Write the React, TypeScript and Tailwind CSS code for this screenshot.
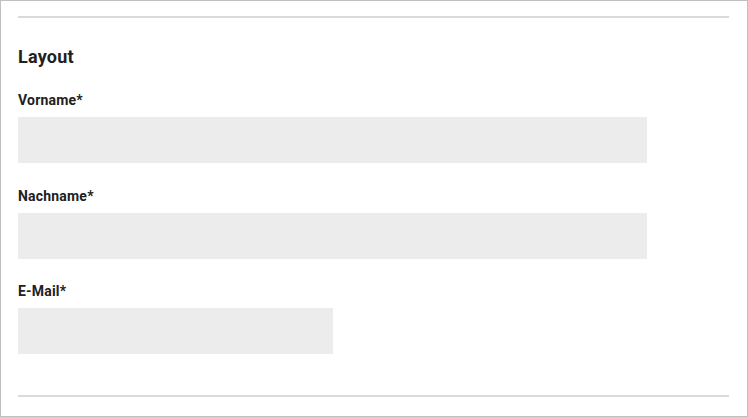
function Field({ label, width }: { label: string; width: string }) {
  return (
    <div className="flex flex-col">
      <label className="text-[14px] leading-[20px] font-bold tracking-[0.2px] text-[#212121]">{label}</label>
      <div className={`mt-[7px] h-[46px] bg-[#ececec] ${width}`} />
    </div>
  );
}

export default function App() {
  return (
    <div
      className="flex h-[417px] w-[748px] flex-col border border-[#c0c0c0] bg-white pt-[15px] pl-[17px] pr-[18px]"
      style={{ fontFamily: "Roboto, 'Liberation Sans', sans-serif" }}
    >
      <div className="h-[2px] bg-[#dadada]" />
      <h2 className="mt-[27px] text-[18px] leading-[24px] font-bold tracking-[0.2px] text-[#212121]">Layout</h2>
      <div className="mt-[21px] flex flex-col gap-[22.5px]">
        <Field label="Vorname*" width="w-[629px]" />
        <Field label="Nachname*" width="w-[629px]" />
        <Field label="E-Mail*" width="w-[315px]" />
      </div>
      <div className="mt-[41px] h-[2px] bg-[#dadada]" />
    </div>
  );
}
